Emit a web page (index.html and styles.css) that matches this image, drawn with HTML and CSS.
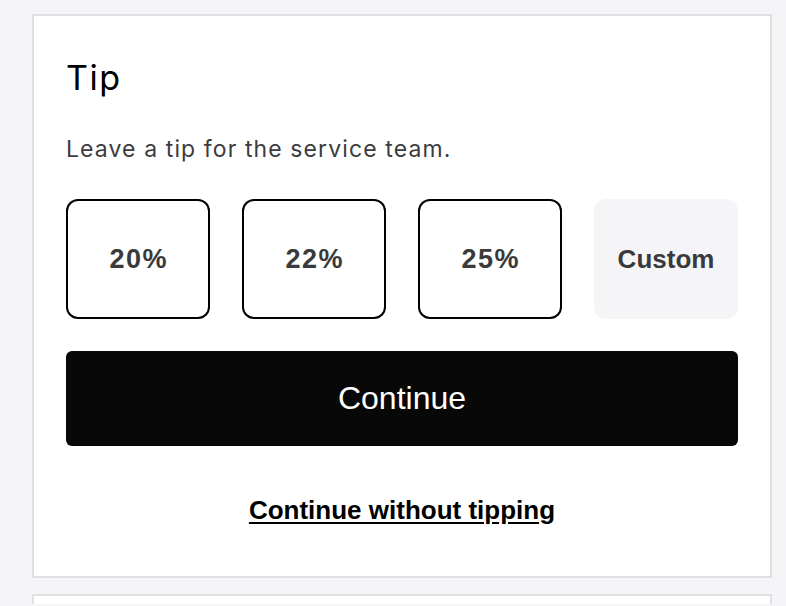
FILE: index.html
```html
<!DOCTYPE html>
<html>
<head>
<meta charset="utf-8">
<link rel="stylesheet" href="styles.css">
</head>
<body>
<div class="page">
  <section class="card">
    <h1 class="title">Tip</h1>
    <p class="subtitle">Leave a tip for the service team.</p>
    <div class="options">
      <button class="option option-pct">20%</button>
      <button class="option option-pct">22%</button>
      <button class="option option-pct">25%</button>
      <button class="option option-custom">Custom</button>
    </div>
    <button class="continue">Continue</button>
    <div class="skip-row"><a class="skip" href="#">Continue without tipping</a></div>
  </section>
  <section class="card card-next"></section>
</div>
</body>
</html>
```
FILE: styles.css
```css
html, body {
  margin: 0;
  padding: 0;
  background: #f5f5f7;
  overflow: hidden;
}
.page {
  padding: 14px 14px 0 32px;
  display: flex;
  flex-direction: column;
  gap: 16px;
}
.card {
  background: #fff;
  border: 2px solid #e0e0e2;
  padding: 42px 32px 51px;
  display: flex;
  flex-direction: column;
}
.card-next {
  height: 8px;
  padding: 0;
  border-bottom: none;
}
.title {
  margin: 0;
  font-family: Inter, "Liberation Sans", sans-serif;
  font-weight: 400;
  font-size: 34px;
  line-height: 40px;
  letter-spacing: 1.5px;
  color: #000;
}
.subtitle {
  margin: 37px 0 0;
  font-family: Inter, "Liberation Sans", sans-serif;
  font-size: 23px;
  line-height: 28px;
  letter-spacing: 1.1px;
  color: #3c3c40;
}
.options {
  margin-top: 36px;
  display: grid;
  grid-template-columns: repeat(4, 1fr);
  gap: 32px;
}
.option {
  height: 120px;
  border: 2px solid #000;
  border-radius: 12px;
  background: #fff;
  font-family: "Liberation Sans", Arial, sans-serif;
  font-weight: 700;
  font-size: 26px;
  color: #3a3a3c;
  padding: 0;
}
.option-pct {
  font-size: 27px;
  letter-spacing: 1.5px;
  padding-left: 1.5px;
}
.option-custom {
  border-color: #f5f5f7;
  background: #f5f5f7;
}
.continue {
  margin-top: 32px;
  height: 95px;
  border: none;
  border-radius: 6px;
  background: #080808;
  color: #fff;
  font-family: "Liberation Sans", Arial, sans-serif;
  font-size: 32px;
  padding: 0;
}
.skip-row {
  margin-top: 49px;
  text-align: center;
  font-family: "Liberation Sans", Arial, sans-serif;
  font-size: 26px;
  line-height: 30px;
}
.skip {
  font-weight: 700;
  color: #000;
  text-decoration: underline;
  text-underline-offset: 3px;
}
```
